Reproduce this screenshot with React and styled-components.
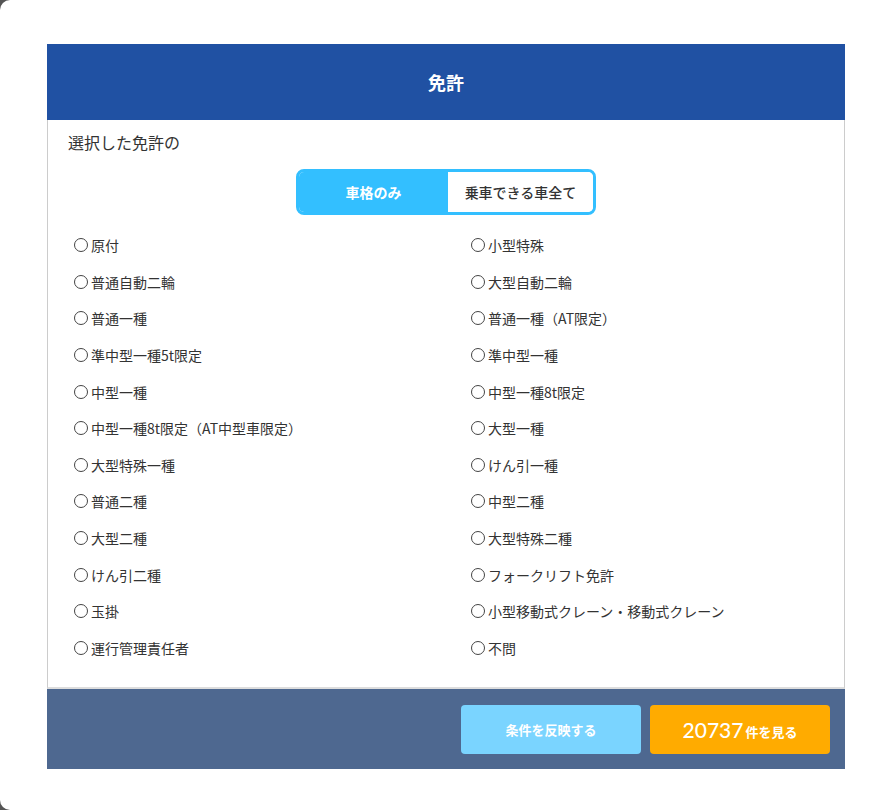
import React from 'react';
import styled, { createGlobalStyle } from 'styled-components';

const GlobalStyle = createGlobalStyle`
  html, body {
    margin: 0;
    padding: 0;
    background: #555555;
  }
  body {
    font-family: "Noto Sans CJK JP", "Noto Sans", sans-serif;
    color: #333333;
  }
`;

const Sheet = styled.div`
  width: 889px;
  height: 810px;
  background: #ffffff;
  border-radius: 10px 0 0 10px;
  padding: 44px 44px 0 47px;
  box-sizing: border-box;
`;

const Panel = styled.div`
  width: 798px;
  display: flex;
  flex-direction: column;
`;

const Header = styled.h1`
  margin: 0;
  height: 76px;
  background: #2051a3;
  color: #ffffff;
  font-size: 18px;
  font-weight: 700;
  display: flex;
  align-items: center;
  justify-content: center;
`;

const Body = styled.div`
  border-left: 1px solid #cccccc;
  border-right: 1px solid #cccccc;
  border-bottom: 2px solid #dddddd;
  padding: 11px 0 21px 20px;
  display: flex;
  flex-direction: column;
`;

const Lead = styled.p`
  margin: 0;
  font-size: 16px;
  line-height: 22px;
  color: #333333;
`;

const Toggle = styled.div`
  align-self: center;
  margin: 16px 0 12px -20px;
  display: flex;
  width: 300px;
  height: 46px;
  border: 3px solid #33bfff;
  border-radius: 8px;
  box-sizing: border-box;
  overflow: hidden;
`;

const ToggleOption = styled.button`
  flex: ${p => (p.$active ? '0 0 149px' : '1')};
  border: none;
  margin: 0;
  padding: 0;
  font-family: inherit;
  font-size: 14px;
  font-weight: ${p => (p.$active ? 700 : 500)};
  background: ${p => (p.$active ? '#33bfff' : '#ffffff')};
  color: ${p => (p.$active ? '#ffffff' : '#333333')};
  cursor: pointer;
`;

const List = styled.ul`
  list-style: none;
  margin: 0;
  padding: 0 0 0 6px;
  display: grid;
  grid-template-columns: 397px 1fr;
  grid-auto-rows: 36.6px;
`;

const Item = styled.li`
  display: flex;
  align-items: center;
  font-size: 14px;
  color: #333333;
  gap: 3px;
`;

const Radio = styled.span`
  width: 12px;
  height: 12px;
  border: 1px solid #444444;
  border-radius: 50%;
  flex-shrink: 0;
`;

const Footer = styled.div`
  height: 80px;
  background: #4e6890;
  display: flex;
  justify-content: flex-end;
  align-items: center;
  gap: 9px;
  padding-right: 15px;
`;

const ActionButton = styled.button`
  width: 180px;
  height: 49px;
  border: none;
  border-radius: 4px;
  background: ${p => p.$bg};
  color: #ffffff;
  font-family: inherit;
  font-size: 13px;
  font-weight: 700;
  display: flex;
  align-items: center;
  justify-content: center;
  gap: 2px;
  cursor: pointer;
`;

const Count = styled.span`
  font-family: "Lato", "Noto Sans CJK JP", sans-serif;
  font-size: 21px;
  font-weight: 500;
`;

const Unit = styled.span`
  margin-top: 5px;
`;

const licenses = [
  '原付', '小型特殊',
  '普通自動二輪', '大型自動二輪',
  '普通一種', '普通一種（AT限定）',
  '準中型一種5t限定', '準中型一種',
  '中型一種', '中型一種8t限定',
  '中型一種8t限定（AT中型車限定）', '大型一種',
  '大型特殊一種', 'けん引一種',
  '普通二種', '中型二種',
  '大型二種', '大型特殊二種',
  'けん引二種', 'フォークリフト免許',
  '玉掛', '小型移動式クレーン・移動式クレーン',
  '運行管理責任者', '不問',
];

const App = () => (
  <>
    <GlobalStyle />
    <Sheet>
      <Panel>
        <Header>免許</Header>
        <Body>
          <Lead>選択した免許の</Lead>
          <Toggle>
            <ToggleOption $active>車格のみ</ToggleOption>
            <ToggleOption>乗車できる車全て</ToggleOption>
          </Toggle>
          <List>
            {licenses.map(name => (
              <Item key={name}>
                <Radio />
                {name}
              </Item>
            ))}
          </List>
        </Body>
        <Footer>
          <ActionButton $bg="#7ad4ff">条件を反映する</ActionButton>
          <ActionButton $bg="#ffab00">
            <Count>20737</Count>
            <Unit>件を見る</Unit>
          </ActionButton>
        </Footer>
      </Panel>
    </Sheet>
  </>
);

export default App;
